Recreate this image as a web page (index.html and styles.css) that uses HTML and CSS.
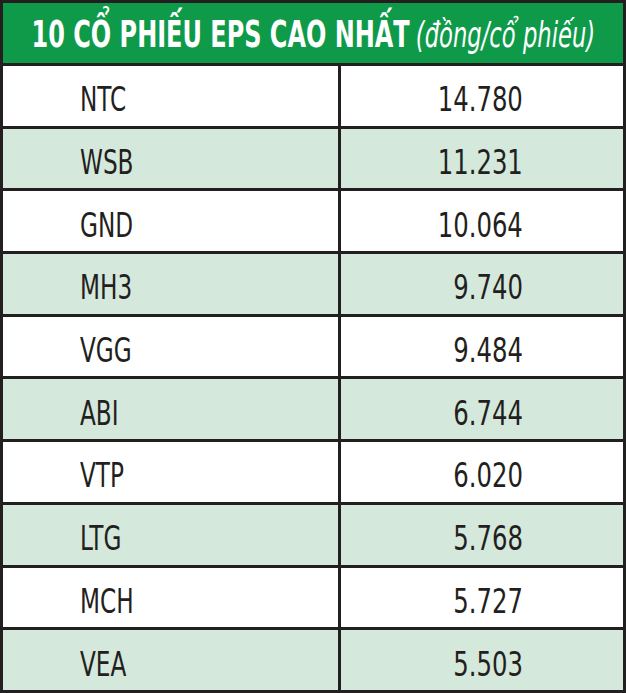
FILE: index.html
```html
<!DOCTYPE html>
<html lang="vi">
<head>
<meta charset="utf-8">
<link rel="stylesheet" href="styles.css">
</head>
<body>
<div class="board">
  <div class="title"><span class="title-text"><span class="title-main">10 CỔ PHIẾU EPS CAO NHẤT</span> <span class="title-unit">(đồng/cổ phiếu)</span></span></div>
  <div class="row"><div class="code"><span>NTC</span></div><div class="val"><span>14.780</span></div></div>
  <div class="row alt"><div class="code"><span>WSB</span></div><div class="val"><span>11.231</span></div></div>
  <div class="row"><div class="code"><span>GND</span></div><div class="val"><span>10.064</span></div></div>
  <div class="row alt"><div class="code"><span>MH3</span></div><div class="val"><span>9.740</span></div></div>
  <div class="row"><div class="code"><span>VGG</span></div><div class="val"><span>9.484</span></div></div>
  <div class="row alt"><div class="code"><span>ABI</span></div><div class="val"><span>6.744</span></div></div>
  <div class="row"><div class="code"><span>VTP</span></div><div class="val"><span>6.020</span></div></div>
  <div class="row alt"><div class="code"><span>LTG</span></div><div class="val"><span>5.768</span></div></div>
  <div class="row"><div class="code"><span>MCH</span></div><div class="val"><span>5.727</span></div></div>
  <div class="row alt"><div class="code"><span>VEA</span></div><div class="val"><span>5.503</span></div></div>
</div>
</body>
</html>
```
FILE: styles.css
```css
html, body {
  margin: 0;
  padding: 0;
  background: #ffffff;
}
.board {
  width: 620px;
  border: 3px solid #231f20;
  font-family: "DejaVu Sans Condensed", "DejaVu Sans", sans-serif;
  font-stretch: condensed;
  color: #231f20;
}
.title {
  height: 60px;
  background: #0f9a4a;
  color: #ffffff;
  display: flex;
  align-items: center;
  justify-content: center;
  overflow: hidden;
  white-space: nowrap;
}
.title-text {
  display: inline-block;
  flex: none;
  padding-top: 3px;
  transform: scaleX(0.72);
  transform-origin: center;
}
.title-main {
  font-weight: bold;
  font-size: 37px;
}
.title-unit {
  font-style: italic;
  font-size: 35px;
  margin-left: 4px;
}
.row {
  display: grid;
  grid-template-columns: 335px 3px 1fr;
  height: 59.7px;
  border-top: 3px solid #231f20;
  background: #ffffff;
}
.row.alt {
  background: #d5e8dc;
}
.code {
  grid-column: 1;
  grid-row: 1;
  display: flex;
  align-items: center;
  padding-left: 77px;
  padding-top: 8px;
  font-size: 33px;
}
.code span {
  display: inline-block;
  transform: scaleX(0.78);
  transform-origin: left center;
}
.val {
  grid-column: 3;
  grid-row: 1;
  display: flex;
  align-items: center;
  justify-content: flex-end;
  padding-right: 100px;
  padding-top: 8px;
  font-size: 33px;
}
.val span {
  display: inline-block;
  transform: scaleX(0.82);
  transform-origin: right center;
}
.row::before {
  content: "";
  grid-column: 2;
  grid-row: 1;
  background: #231f20;
}
```
